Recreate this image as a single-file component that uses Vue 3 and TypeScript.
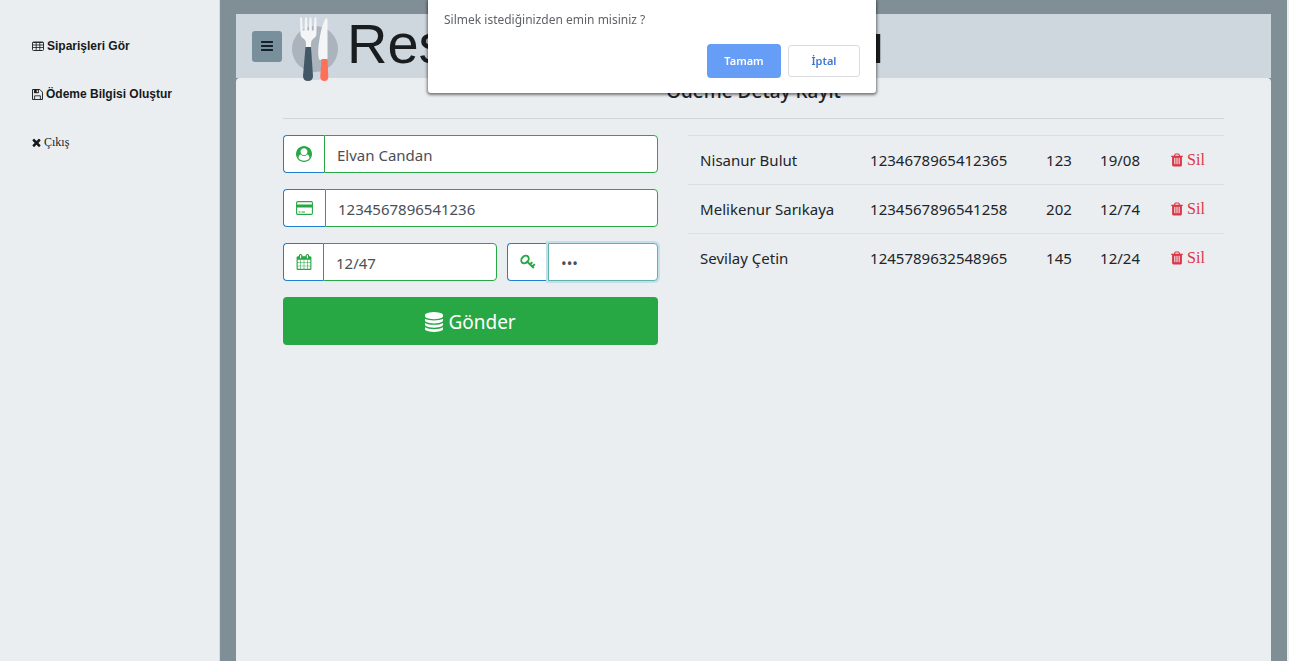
<script setup lang="ts">
import { ref } from 'vue'

interface Payment {
  name: string
  card: string
  cvv: string
  expiry: string
}

const payments = ref<Payment[]>([
  { name: 'Nisanur Bulut', card: '1234678965412365', cvv: '123', expiry: '19/08' },
  { name: 'Melikenur Sarıkaya', card: '1234567896541258', cvv: '202', expiry: '12/74' },
  { name: 'Sevilay Çetin', card: '1245789632548965', cvv: '145', expiry: '12/24' },
])

const holder = ref('Elvan Candan')
const cardNumber = ref('1234567896541236')
const expiry = ref('12/47')
const cvv = ref('123')

const pending = ref<number | null>(2)

function confirmDelete() {
  if (pending.value !== null) payments.value.splice(pending.value, 1)
  pending.value = null
}
</script>

<template>
  <div class="layout">
    <nav class="sidebar">
      <a href="#" class="nav-link">
        <svg class="nav-icon" viewBox="0 0 12 10" fill="none" stroke="currentColor" aria-hidden="true">
          <rect x=".5" y="1" width="11" height="8.500" rx="1" stroke-width=".9" />
          <path d="M1 1.500h10M1 4h10M1 6.500h10M4.200 1v8.500M7.800 1v8.500" stroke-width=".8" />
        </svg>
        Siparişleri Gör
      </a>
      <a href="#" class="nav-link">
        <svg class="nav-icon save" viewBox="1 1 10.500 10.500" fill="none" stroke="currentColor" aria-hidden="true">
          <path d="M1.500 1.500h7l2.500 2.500v7h-9.500z" stroke-linejoin="round" stroke-width=".9" />
          <path d="M3.500 11v-3.500h5.500v3.500" stroke-width=".8" />
          <path d="M3 1.500h4.500v3.500h-4.500z" fill="currentColor" stroke="none" />
          <path d="M5.500 2.200h1.200v1.900h-1.200z" fill="#eaeef1" stroke="none" />
        </svg>
        Ödeme Bilgisi Oluştur
      </a>
      <a href="#" class="nav-link exit">
        <svg class="nav-icon close" viewBox="250 250 1290 1310" fill="currentColor" aria-hidden="true">
          <path d="M1490 1322q0 40-28 68l-136 136q-28 28-68 28t-68-28l-294-294-294 294q-28 28-68 28t-68-28l-136-136q-28-28-28-68t28-68l294-294-294-294q-28-28-28-68t28-68l136-136q28-28 68-28t68 28l294 294 294-294q28-28 68-28t68 28l136 136q28 28 28 68t-28 68l-294 294 294 294q28 28 28 68z" />
        </svg>
        Çıkış
      </a>
    </nav>

    <main class="main">
      <header class="topbar">
        <button type="button" class="toggle" aria-label="Menü">
          <svg viewBox="0 0 12 10" fill="currentColor" aria-hidden="true">
            <rect width="12" height="2" rx=".5" />
            <rect y="4" width="12" height="2" rx=".5" />
            <rect y="8" width="12" height="2" rx=".5" />
          </svg>
        </button>
        <svg class="logo" viewBox="0 0 50 64" aria-hidden="true">
          <circle cx="25" cy="32" r="31" fill="#ced6e0" />
          <circle cx="25" cy="32" r="23" fill="#abb4bd" />
          <path d="M10 1q1-1.500 2 0l.7 12.500h1.800L15 1q1-1.500 2 0l.4 12.500h1.600L19.500 1q1-1.500 2 0l.4 12.500h1.700L24.500 1q1-1.500 2 0v15q0 4-3 5.500-2.500 1.500-2.500 4.500v5h-5v-5q0-3-2.500-4.500-3-1.500-3-5z" fill="#f3f5f7" />
          <path d="M15.500 30h5.500l2 29q0 5-5 5t-5-5z" fill="#425866" />
          <path d="M36 1q1.500 0 1.500 2v40h-8q-2-4-1-14Q31 8 36 1z" fill="#f3f5f7" />
          <path d="M31.500 42h6l.8 17.500q0 4.500-4 4.500t-4-4.500z" fill="#ff7058" />
        </svg>
        <h1 class="brand">Restoran Uygulaması</h1>
      </header>

      <section class="card">
        <h2 class="title">Ödeme Detay Kayıt</h2>
        <div class="columns">
          <form class="form" @submit.prevent>
            <div class="field">
              <label class="addon" for="holder" aria-label="Ad Soyad">
                <svg viewBox="0 0 1792 1792" fill="currentColor" aria-hidden="true">
                  <path d="M1523 1339q-22-155-87.500-257.500t-184.500-118.500q-67 74-159.500 115.500t-195.500 41.500-195.500-41.500-159.500-115.500q-119 16-184.500 118.500t-87.500 257.500q106 150 271 237.500t356 87.500 356-87.500 271-237.500zm-243-699q0-159-112.500-271.500t-271.500-112.500-271.500 112.500-112.500 271.500 112.500 271.500 271.500 112.500 271.500-112.500 112.500-271.500zm512 256q0 182-71 347.500t-190.500 286-285.500 191.500-349 71q-182 0-348-71t-286-191-191-286-71-348 71-348 191-286 286-191 348-71 348 71 286 191 191 286 71 348z" fill-rule="evenodd" />
                </svg>
              </label>
              <input id="holder" v-model="holder" type="text" class="control" />
            </div>
            <div class="field">
              <label class="addon wide" for="card" aria-label="Kart Numarası">
                <svg viewBox="0 0 17 14" fill="none" stroke="currentColor" aria-hidden="true">
                  <rect x=".6" y=".6" width="15.800" height="12.800" rx="1.200" stroke-width="1.100" />
                  <path d="M.5 3.500h16v3h-16z" fill="currentColor" stroke="none" />
                  <path d="M2.500 11h2M5.500 11h3.500" />
                </svg>
              </label>
              <input id="card" v-model="cardNumber" type="text" class="control" />
            </div>
            <div class="row">
              <div class="field">
                <label class="addon narrow" for="expiry" aria-label="Son Kullanma Tarihi">
                  <svg viewBox="0 0 1792 1792" fill="currentColor" aria-hidden="true">
                    <path d="M192 1664h288v-288h-288v288zm352 0h320v-288h-320v288zm-352-352h288v-320h-288v320zm352 0h320v-320h-320v320zm-352-384h288v-288h-288v288zm736 736h320v-288h-320v288zm-384-736h320v-288h-320v288zm768 736h288v-288h-288v288zm-384-352h320v-320h-320v320zm-352-864v-288q0-13-9.500-22.500t-22.500-9.500h-64q-13 0-22.500 9.500t-9.500 22.500v288q0 13 9.500 22.500t22.500 9.500h64q13 0 22.500-9.500t9.500-22.500zm736 864h288v-320h-288v320zm-384-384h320v-288h-320v288zm384 0h288v-288h-288v288zm32-480v-288q0-13-9.500-22.500t-22.500-9.500h-64q-13 0-22.500 9.500t-9.500 22.500v288q0 13 9.500 22.500t22.500 9.500h64q13 0 22.500-9.500t9.500-22.500zm384-64v1280q0 52-38 90t-90 38h-1408q-52 0-90-38t-38-90v-1280q0-52 38-90t90-38h128v-96q0-66 47-113t113-47h64q66 0 113 47t47 113v96h384v-96q0-66 47-113t113-47h64q66 0 113 47t47 113v96h128q52 0 90 38t38 90z" />
                  </svg>
                </label>
                <input id="expiry" v-model="expiry" type="text" class="control" />
              </div>
              <div class="field">
                <label class="addon" for="cvv" aria-label="CVV">
                  <svg viewBox="0 0 16 16" fill="none" stroke="currentColor" aria-hidden="true">
                    <ellipse cx="5" cy="5.500" rx="4.200" ry="3.200" transform="rotate(-45 5 5.500)" stroke-width="1.900" />
                    <path d="M7.200 7.700l6.600 6.300M10 10.500l2.300-2.300M12.300 12.500l2.500-2.400" stroke-width="1.900" />
                  </svg>
                </label>
                <input id="cvv" v-model="cvv" type="password" class="control active" />
              </div>
            </div>
            <button type="submit" class="submit">
              <svg viewBox="128 0 1536 1792" fill="currentColor" preserveAspectRatio="none" aria-hidden="true">
                <path d="M896 768q237 0 443-43t325-127v170q0 69-103 128t-280 93.500-385 34.500-385-34.500-280-93.500-103-128v-170q119 84 325 127t443 43zm0 768q237 0 443-43t325-127v170q0 69-103 128t-280 93.500-385 34.500-385-34.500-280-93.500-103-128v-170q119 84 325 127t443 43zm0-384q237 0 443-43t325-127v170q0 69-103 128t-280 93.500-385 34.500-385-34.500-280-93.500-103-128v-170q119 84 325 127t443 43zm0-1152q208 0 385 34.500t280 93.500 103 128v128q0 69-103 128t-280 93.500-385 34.500-385-34.500-280-93.500-103-128v-128q0-69 103-128t280-93.500 385-34.500z" />
              </svg>
              Gönder
            </button>
          </form>

          <table class="payments">
            <colgroup>
              <col class="c-name" />
              <col class="c-card" />
              <col class="c-cvv" />
              <col class="c-expiry" />
              <col />
            </colgroup>
            <tbody>
              <tr v-for="(p, i) in payments" :key="p.card">
                <td>{{ p.name }}</td>
                <td>{{ p.card }}</td>
                <td>{{ p.cvv }}</td>
                <td>{{ p.expiry }}</td>
                <td>
                  <a href="#" class="delete" @click.prevent="pending = i">
                    <svg viewBox="192 128 1408 1536" fill="currentColor" aria-hidden="true">
                      <path d="M704 1376v-704q0-14-9-23t-23-9h-64q-14 0-23 9t-9 23v704q0 14 9 23t23 9h64q14 0 23-9t9-23zm256 0v-704q0-14-9-23t-23-9h-64q-14 0-23 9t-9 23v704q0 14 9 23t23 9h64q14 0 23-9t9-23zm256 0v-704q0-14-9-23t-23-9h-64q-14 0-23 9t-9 23v704q0 14 9 23t23 9h64q14 0 23-9t9-23zm-544-992h448l-48-117q-7-9-17-11h-317q-10 2-17 11zm928 32v64q0 14-9 23t-23 9h-96v948q0 83-47 143.500t-113 60.500h-832q-66 0-113-58.500t-47-141.500v-952h-96q-14 0-23-9t-9-23v-64q0-14 9-23t23-9h309l70-167q15-37 54-63t79-26h320q40 0 79 26t54 63l70 167h309q14 0 23 9t9 23z" />
                    </svg>
                    Sil
                  </a>
                </td>
              </tr>
            </tbody>
          </table>
        </div>
      </section>
    </main>

    <div v-if="pending !== null" class="overlay">
      <div class="dialog" role="alertdialog" aria-labelledby="dialog-text">
        <p id="dialog-text" class="dialog-text">Silmek istediğinizden emin misiniz ?</p>
        <div class="dialog-actions">
          <button type="button" class="btn primary" @click="confirmDelete">Tamam</button>
          <button type="button" class="btn" @click="pending = null">İptal</button>
        </div>
      </div>
    </div>
  </div>
</template>

<style>
body {
  background: #eaeef1;
}
</style>

<style scoped>
.layout,
.layout * {
  box-sizing: border-box;
}

.layout {
  display: flex;
  min-height: 100vh;
  padding-right: 2px;
  background: #eaeef1;
  color: #212529;
  font-family: 'Noto Sans', 'Open Sans', sans-serif;
  font-size: 15px;
  line-height: 24px;
}

.sidebar {
  flex: 0 0 220px;
  display: flex;
  flex-direction: column;
  gap: 24px;
  padding: 34px 32px;
  border-right: 1px solid #d5dcdf;
}

.nav-link {
  display: flex;
  align-items: center;
  gap: 3px;
  color: #16191b;
  font: bold 12px/24px 'Liberation Sans', Arial, sans-serif;
  text-decoration: none;
  white-space: nowrap;
}

.nav-icon {
  width: 12px;
  height: 10px;
}

.nav-icon.save {
  width: 11px;
  height: 11px;
}

.nav-icon.close {
  width: 9px;
  height: 9px;
}

.exit {
  font: 12px/24px 'Liberation Serif', 'Times New Roman', serif;
}

.main {
  flex: 1;
  min-width: 0;
  display: flex;
  flex-direction: column;
  padding: 14px 16px 0;
  background: #808f96;
}

.topbar {
  display: flex;
  align-items: center;
  height: 64px;
  padding-left: 16px;
  background: #ced7de;
}

.toggle {
  display: flex;
  align-items: center;
  justify-content: center;
  width: 30px;
  height: 31px;
  padding: 0;
  border: 0;
  border-radius: 3px;
  background: #78909c;
  color: #16202a;
}

.toggle svg {
  width: 12px;
  height: 10px;
}

.logo {
  position: relative;
  z-index: 1;
  width: 50px;
  height: 64px;
  margin: 6px 0 0 8px;
}

.brand {
  margin: 0 0 0 7px;
  color: #1a1d1f;
  font: 56px/60px 'Liberation Sans', Arial, sans-serif;
  padding-bottom: 4px;
  white-space: nowrap;
}

.card {
  flex: 1;
  padding: 1px 47px 0;
  border-radius: 4px 4px 0 0;
  background: #eaeef1;
}

.title {
  margin: 0 0 16px;
  padding-bottom: 15px;
  border-bottom: 1px solid #d1d5d8;
  font-size: 19px;
  font-weight: 500;
  line-height: 24px;
  text-align: center;
}

.columns {
  display: grid;
  grid-template-columns: 7fr 10fr;
  gap: 30px;
  align-items: start;
}

.form {
  display: flex;
  flex-direction: column;
  gap: 16px;
}

.row {
  display: grid;
  grid-template-columns: 214fr 151fr;
  gap: 10px;
}

.field {
  display: flex;
  height: 38px;
  min-width: 0;
}

.addon {
  flex: 0 0 41px;
  display: flex;
  align-items: center;
  justify-content: center;
  border: 1px solid #1f7fd0;
  border-right: 0;
  border-radius: 4px 0 0 4px;
  background: #fff;
  color: #28a745;
}

.addon.wide {
  flex-basis: 42px;
}

.addon.narrow {
  flex-basis: 40px;
}

.addon svg {
  width: 16px;
  height: 16px;
}

.addon.wide svg {
  width: 17px;
  height: 14px;
}

.control {
  flex: 1;
  min-width: 0;
  padding: 2px 12px 0;
  border: 1px solid #28a745;
  border-radius: 0 4px 4px 0;
  outline: 0;
  background: #fff;
  color: #495057;
  font: inherit;
}

.control.active {
  border-color: #5fb3a8;
  box-shadow: 0 0 0 2px #c3dfeb;
}

.submit {
  display: flex;
  align-items: center;
  justify-content: center;
  gap: 5px;
  height: 48px;
  padding-top: 3px;
  border: 0;
  border-radius: 4px;
  background: #28a745;
  color: #fff;
  font: inherit;
  font-size: 19px;
}

.submit svg {
  width: 18px;
  height: 20px;
}

.payments {
  width: 100%;
  border-collapse: collapse;
  table-layout: fixed;
}

.c-name {
  width: 170px;
}

.c-card {
  width: 176px;
}

.c-cvv {
  width: 54px;
}

.c-expiry {
  width: 71px;
}

.payments td {
  height: 49px;
  padding: 0 0 0 12px;
  border-top: 1px solid #dadfe3;
  white-space: nowrap;
}

.delete {
  display: flex;
  align-items: center;
  gap: 4px;
  color: #dc3545;
  font: 16px/24px 'Liberation Serif', 'Times New Roman', serif;
  text-decoration: none;
}

.delete svg {
  width: 12px;
  height: 14px;
}

.overlay {
  position: fixed;
  inset: 0 0 auto;
  z-index: 10;
  display: flex;
  justify-content: center;
  padding-left: 15px;
}

.dialog {
  width: 448px;
  padding: 10px 16px 16px;
  border-radius: 0 0 3px 3px;
  background: #fff;
  box-shadow: 0 1px 3px 1px rgba(0, 0, 0, 0.5);
}

.dialog-text {
  margin: 0 0 15px;
  color: #5f6368;
  font-size: 12px;
  line-height: 20px;
}

.dialog-actions {
  display: flex;
  justify-content: flex-end;
  gap: 8px;
}

.btn {
  width: 72px;
  height: 32px;
  padding: 0;
  border: 1px solid #dadce0;
  border-radius: 3px;
  background: #fff;
  color: #3f76d0;
  font: 600 11px/16px 'Noto Sans', 'Open Sans', sans-serif;
}

.btn.primary {
  border-color: #669df6;
  background: #669df6;
  box-shadow: 0 0 0 1px #669df6;
  color: #fff;
}
</style>
